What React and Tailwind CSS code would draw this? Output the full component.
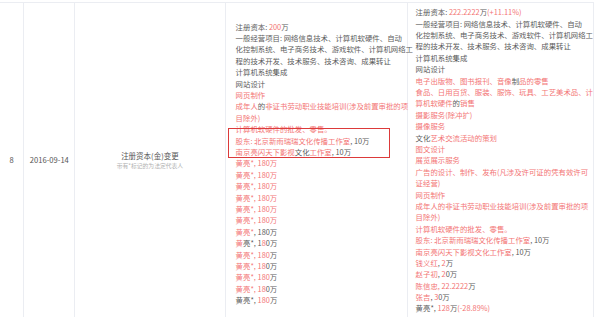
import React from "react";

const R = ({ children }) => <span className="text-[#f37575]">{children}</span>;

const leftLines = [
  [<>注册资本: <R>200</R>万</>],
  [<>一般经营项目: 网络信息技术、计算机软硬件、自动</>],
  [<>化控制系统、电子商务技术、游戏软件、计算机网络工</>],
  [<>程的技术开发、技术服务、技术咨询、成果转让</>],
  [<>计算机系统集成</>],
  [<>网站设计</>],
  [<><R>网页制作</R></>],
  [<><R>成年人</R>的<R>非证书劳动职业技能培训(涉及前置审批的项</R></>],
  [<><R>目除外)</R></>],
  [<><R>计算机软硬件的批发、零售。</R></>],
  [<><R>股东: 北京新雨瑞瑞文化传播工作室</R>, 10万</>],
  [<><R>南京亮闪天下影视</R>文化<R>工作室</R>, 10万</>],
  [<><R>黄亮*, 180万</R></>],
  [<><R>黄亮*, 180万</R></>],
  [<><R>黄亮*, 180万</R></>],
  [<><R>黄亮*, 180万</R></>],
  [<><R>黄亮*, 180万</R></>],
  [<><R>黄亮*, 180万</R></>],
  [<><R>黄亮*</R>, 180万</>],
  [<><R>黄</R>亮*, 1<R>8</R>0万</>],
  [<><R>黄亮*, 180</R>万</>],
  [<><R>黄亮*, 18</R>0万</>],
  [<><R>黄亮*, 180</R>万</>],
  [<><R>黄亮*, 18</R>0万</>],
  [<>黄亮*, <R>180</R>万</>],
];

const rightLines = [
  [<>注册资本: <R>222.2222</R>万<R>(+11.11%)</R></>],
  [<>一般经营项目: 网络信息技术、计算机软硬件、自动</>],
  [<>化控制系统、电子商务技术、游戏软件、计算机网络工</>],
  [<>程的技术开发、技术服务、技术咨询、成果转让</>],
  [<>计算机系统集成</>],
  [<>网站设计</>],
  [<><R>电子出版物、图书报刊、音像</R>制<R>品的零售</R></>],
  [<><R>食品、日用百货、服装、服饰、玩具、工艺美术品、计</R></>],
  [<><R>算机软硬件</R>的<R>销售</R></>],
  [<><R>摄影服务(除冲扩)</R></>],
  [<><R>摄像服务</R></>],
  [<>文化<R>艺术交流活动的策划</R></>],
  [<><R>图文设计</R></>],
  [<><R>展览展示服务</R></>],
  [<><R>广告的设计、制作、发布(凡涉及许可证的凭有效许可</R></>],
  [<><R>证经营)</R></>],
  [<><R>网页制作</R></>],
  [<><R>成年人的非证书劳动职业技能培训(涉及前置审批的项</R></>],
  [<><R>目除外)</R></>],
  [<><R>计算机软硬件的批发、零售。</R></>],
  [<><R>股东: 北京新雨瑞瑞文化传播工作室</R>, 10万</>],
  [<><R>南京亮闪天下影视文化工作室</R>, 10万</>],
  [<><R>钱义红</R>, <R>2</R>万</>],
  [<><R>赵子初</R>, <R>2</R>0万</>],
  [<><R>陈信忠, 22.2222</R>万</>],
  [<><R>张吉</R>, <R>3</R>0万</>],
  [<>黄亮*, <R>128</R>万<R>(-28.89%)</R></>],
];

function Lines({ lines }) {
  return (
    <div className="flex flex-col">
      {lines.map((l, i) => (
        <div key={i} className="whitespace-nowrap leading-[11.4px] h-[11.4px]">
          {l[0]}
        </div>
      ))}
    </div>
  );
}

export default function App() {
  return (
    <div
      className="w-[600px] h-[317px] overflow-hidden bg-white text-[#5c5c5c] text-[7.4px] pt-[2px]"
      style={{ fontFamily: '"Noto Sans CJK SC", "Noto Sans", sans-serif' }}
    >
      <div className="relative w-[594px] flex border-t border-r border-[#ebedf2] h-[315px]">
        <div className="w-[25px] flex items-center justify-center border-r border-[#ebedf2] text-[7.6px] text-[#555]">
          8
        </div>
        <div className="w-[52px] flex items-center justify-center border-r border-[#ebedf2] text-[7.6px] text-[#555]">
          2016-09-14
        </div>
        <div className="w-[154px] flex flex-col items-center justify-start pt-[147px] border-r border-[#ebedf2]">
          <div className="leading-[11px] text-[7.5px] text-[#555]">注册资本(金)变更</div>
          <div className="leading-[10px] text-[5.8px] text-[#b0b0b0]">带有*标记的为法定代表人</div>
        </div>
        <div className="w-[182px] pl-[10px] pt-[17.7px] border-r border-[#ebedf2]">
          <Lines lines={leftLines} />
        </div>
        <div className="flex-1 pl-[8px] pt-[3.3px]">
          <Lines lines={rightLines} />
        </div>
        <div className="absolute left-[228px] top-[125px] w-[162px] h-[30px] border-[1.5px] border-[#dc3a3a]" />
      </div>
    </div>
  );
}
